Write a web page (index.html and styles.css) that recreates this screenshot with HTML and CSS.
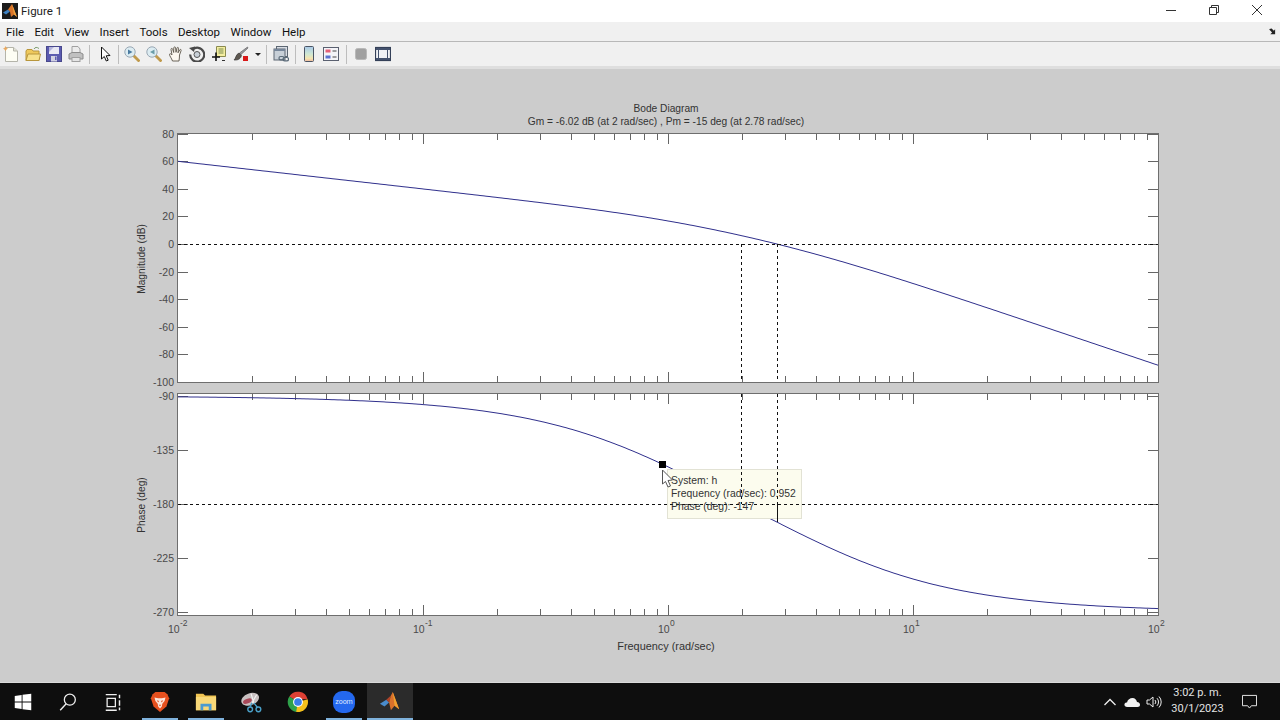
FILE: index.html
```html
<!DOCTYPE html>
<html>
<head>
    <title>Figure 1</title>
    <link rel="stylesheet" href="styles.css">
</head>
<body>
    <div class="titlebar">
        <svg class="title-icon" viewBox="0 0 16 16">
            <rect width="16" height="16" fill="#1c1c1c"/>
            <path d="M1 9.5 L6 6.5 L8 8.5 L4 11.5 Z" fill="#3f83c4"/>
            <path d="M6 6.5 L10 1 L15 14 L12 11.5 L9 14 L8 8.5 Z" fill="#d9742a"/>
            <path d="M10 1 L15 14 L12 11.5 Z" fill="#f0a23c"/>
        </svg>
        <span class="title-text">Figure 1</span>
        <div class="window-controls">
            <div class="win-btn">
                <svg viewBox="0 0 12 12"><path d="M1 6.5 H11" stroke="#333" fill="none"/></svg>
            </div>
            <div class="win-btn">
                <svg viewBox="0 0 12 12"><path d="M1.5 3.5 H8.5 V10.5 H1.5 Z M3.5 3.5 V1.5 H10.5 V8.5 H8.5" stroke="#333" fill="none"/></svg>
            </div>
            <div class="win-btn">
                <svg viewBox="0 0 12 12"><path d="M1 1 L11 11 M11 1 L1 11" stroke="#333" fill="none"/></svg>
            </div>
        </div>
    </div>

    <div class="menubar">
        <span>File</span>
        <span>Edit</span>
        <span>View</span>
        <span>Insert</span>
        <span>Tools</span>
        <span>Desktop</span>
        <span>Window</span>
        <span>Help</span>
        <svg class="dock-arrow" viewBox="0 0 8 8"><path d="M0.5 1 L3 0.5 L5.5 3 L7 1.5 V7 H1.5 L3.5 5 L0.5 2 Z" fill="#222"/></svg>
    </div>

    <div class="toolbar">
        <div class="tool">
            <svg viewBox="0 0 16 16">
                <path d="M2.5 1.5 H10.5 L14.5 5 V15.5 H2.5 Z" fill="#fdfdf4" stroke="#b4b4aa"/>
                <path d="M10.5 1.5 V5 H14.5" fill="#e2e2d6" stroke="#b4b4aa"/>
                <path d="M2.5 0 L3.5 2 L5 2.5 L3.5 3.5 L2.5 5 L1.5 3.5 L0 2.5 L1.5 2 Z" fill="#e8a860"/>
            </svg>
        </div>
        <div class="tool">
            <svg viewBox="0 0 16 16">
                <path d="M1 5 V14.5 H14 V5 H8 L7 3.5 H2 Z" fill="#efc95c" stroke="#b8963c"/>
                <path d="M1 14.5 L3 8 H15.5 L14 14.5 Z" fill="#f8e28c" stroke="#b8963c"/>
                <path d="M9 3 C10 1 12 1 14 2.5" fill="none" stroke="#7a9a6a"/>
            </svg>
        </div>
        <div class="tool">
            <svg viewBox="0 0 16 16">
                <rect x="0.5" y="0.5" width="15" height="15" fill="#5a5ab0" stroke="#48488c"/>
                <path d="M3 1 H13 V8 L3 8 Z" fill="#e8e8f4"/>
                <path d="M3 1 H8 L3 6 Z" fill="#b4b4dc"/>
                <rect x="5" y="10" width="6" height="5.5" fill="#d0d0e2"/>
                <rect x="9" y="10.5" width="1.5" height="3.5" fill="#5a5ab0"/>
            </svg>
        </div>
        <div class="tool">
            <svg viewBox="0 0 16 16">
                <path d="M4 7 V0.5 H10 L12 3 V7 Z" fill="#ececec" stroke="#a0a0a0"/>
                <path d="M1 8 L4 6.5 H12 L15 8 V13 H1 Z" fill="#c0c0c0" stroke="#8c8c8c"/>
                <rect x="4" y="11.5" width="8" height="4" fill="#e4e4e4" stroke="#a0a0a0"/>
            </svg>
        </div>
        <div class="tool-sep sep-a"></div>
        <div class="tool">
            <svg viewBox="0 0 16 16">
                <path d="M4.5 1 V13 L7.3 10.5 L9.3 15 L11.2 14.2 L9.2 9.8 L13 9.5 Z" fill="#fff" stroke="#111"/>
            </svg>
        </div>
        <div class="tool-sep sep-b"></div>
        <div class="tool">
            <svg viewBox="0 0 16 16">
                <path d="M9.5 9.5 L15.5 15.5" stroke="#c09a4c" stroke-width="2.8"/>
                <circle cx="6" cy="6" r="5.2" fill="#dcecf2" stroke="#9aa8b4"/>
                <path d="M4 3.5 L8.5 6 L4 8.5 Z" fill="#4a7aa0"/>
            </svg>
        </div>
        <div class="tool">
            <svg viewBox="0 0 16 16">
                <path d="M9.5 9.5 L15.5 15.5" stroke="#c09a4c" stroke-width="2.8"/>
                <circle cx="6" cy="6" r="5.2" fill="#dcecf2" stroke="#9aa8b4"/>
                <path d="M8.5 3.5 L4 6 L8.5 8.5 Z" fill="#6a9ca8"/>
            </svg>
        </div>
        <div class="tool">
            <svg viewBox="-1.5 0 16 16">
                <path d="M4 15 C3 12 1 10 1 8.5 C1 7.5 2.3 7.5 3 8.5 L3.5 9 L2.5 3.5 C2.3 2.3 3.8 2 4.2 3.2 L5.2 6.5 L5.3 1.8 C5.4 0.6 7 0.6 7.1 1.8 L7.5 6.3 L8.5 2 C8.8 1 10.2 1.2 10 2.5 L9.5 6.8 L11.3 3.8 C12 3 13 3.6 12.6 4.6 L11 9 C10.8 11 11 13 10.5 15 Z" fill="#fdf8f0" stroke="#5a5448" stroke-width="0.9"/>
            </svg>
        </div>
        <div class="tool">
            <svg viewBox="0 0 16 16">
                <path d="M3.5 3.5 A7 7 0 1 1 1.2 8.5" fill="none" stroke="#4a4a4a" stroke-width="2.2"/>
                <path d="M0 2 L6 0.5 L5 6 Z" fill="#4a4a4a"/>
                <circle cx="8" cy="8.5" r="3" fill="#c8d0d8" stroke="#555"/>
            </svg>
        </div>
        <div class="tool">
            <svg viewBox="0 0 16 16">
                <path d="M5.5 0.5 H14.5 V10.5 H5.5 Z" fill="#f4eea0" stroke="#8a8a50"/>
                <path d="M7.5 3 H12.5 M7.5 5 H12.5 M7.5 7 H12.5" stroke="#7a8a50"/>
                <path d="M5 6.5 V15 M1 11 H9" stroke="#111" stroke-width="1.6"/>
                <path d="M11 14.5 H14" stroke="#333"/>
            </svg>
        </div>
        <div class="tool">
            <svg viewBox="0 0 16 16">
                <path d="M14.5 1 L15 2 L8 8.5 L6.5 7 Z" fill="#9a9aa0" stroke="#555" stroke-width="0.6"/>
                <path d="M6 7 L8.5 9.5 C8 12.5 5 14.5 1 14 C3 12.5 2.5 8.5 6 7 Z" fill="#5e5850" stroke="#2c2c2c" stroke-width="0.6"/>
                <rect x="10" y="10" width="5" height="5" fill="#d81818"/>
            </svg>
        </div>
        <div class="tool-drop"><span class="drop-caret"></span></div>
        <div class="tool-sep sep-c"></div>
        <div class="tool">
            <svg viewBox="0 0 16 16">
                <rect x="3.5" y="0.5" width="11" height="10" fill="#d8dde4" stroke="#5c6672"/>
                <rect x="1" y="3" width="11" height="11" fill="#c8d0d8" stroke="#5c6672"/>
                <rect x="1" y="3" width="11" height="2" fill="#76869a"/>
                <rect x="6" y="10.5" width="5" height="3.4" rx="1.6" fill="none" stroke="#5a6a78" stroke-width="1.2"/>
                <rect x="10" y="11.5" width="5.5" height="3.4" rx="1.6" fill="none" stroke="#5a6a78" stroke-width="1.2"/>
            </svg>
        </div>
        <div class="tool-sep sep-d"></div>
        <div class="tool">
            <svg viewBox="0 0 16 16">
                <defs>
                    <linearGradient id="colorbar-fill" x1="0" y1="0" x2="0" y2="1">
                        <stop offset="0" stop-color="#a8c8e8"/>
                        <stop offset="0.5" stop-color="#cfe8d4"/>
                        <stop offset="0.8" stop-color="#f4e4b0"/>
                        <stop offset="1" stop-color="#eeb8a0"/>
                    </linearGradient>
                </defs>
                <rect x="3.5" y="0.5" width="9" height="15" rx="1" fill="url(#colorbar-fill)" stroke="#4a5464"/>
            </svg>
        </div>
        <div class="tool">
            <svg viewBox="0 0 16 16">
                <rect x="0.5" y="1.5" width="15" height="13" fill="#f4f4f8" stroke="#5a6070"/>
                <rect x="2.5" y="3.5" width="5" height="3" fill="#e46078"/>
                <rect x="2.5" y="9.5" width="5" height="3" fill="#5a72d0"/>
                <path d="M9.5 5 H13.5 M9.5 11 H13.5" stroke="#444"/>
            </svg>
        </div>
        <div class="tool-sep sep-e"></div>
        <div class="tool">
            <svg viewBox="0 0 16 16">
                <rect x="2.5" y="2.5" width="11" height="11" rx="2" fill="#a0a0a0" stroke="#b8b8b8"/>
            </svg>
        </div>
        <div class="tool">
            <svg viewBox="0 0 16 16">
                <rect x="0.5" y="1.5" width="15" height="13" fill="#f0f2f6" stroke="#344058" stroke-width="1.2"/>
                <rect x="1" y="2" width="14" height="2" fill="#44526e"/>
                <rect x="1" y="12" width="14" height="2" fill="#44526e"/>
                <path d="M3.5 4 V12 M12.5 4 V12" stroke="#44526e"/>
            </svg>
        </div>
    </div>
    <div class="toolbar-edge"></div>

    <div class="figure">
        <svg id="plot" class="plot" viewBox="0 69 1280 614"></svg>
    </div>

    <div class="taskbar">
        <div class="task-item first-item">
            <svg class="task-icon" viewBox="0 0 24 24">
                <path d="M3 5.5 L10.5 4.4 V11.5 H3 Z M11.5 4.2 L21 3 V11.5 H11.5 Z M3 12.5 H10.5 V19.6 L3 18.5 Z M11.5 12.5 H21 V21 L11.5 19.8 Z" fill="#fff"/>
            </svg>
        </div>
        <div class="task-item">
            <svg class="task-icon" viewBox="0 0 24 24">
                <circle cx="14" cy="9.5" r="6" fill="none" stroke="#eee" stroke-width="1.4"/>
                <path d="M10 14 L3.5 21" stroke="#eee" stroke-width="1.5"/>
            </svg>
        </div>
        <div class="task-item">
            <svg class="task-icon" viewBox="0 0 24 24">
                <path d="M3 4 H15 M3 21 H15 M4.5 8 H13.5 V17 H4.5 Z" fill="none" stroke="#eee" stroke-width="1.4"/>
                <path d="M18 4 V8 M18 10 V16 M18 18 V21" stroke="#eee" stroke-width="1.6"/>
            </svg>
        </div>
        <div class="task-item has-window">
            <svg class="task-icon" viewBox="0 0 24 24">
                <path d="M7 1 H17 L20 3.5 L22 8 L19 17 L12 23 L5 17 L2 8 L4 3.5 Z" fill="#e6501e"/>
                <path d="M6 7 L10 8 H14 L18 7 L17 11 L14.5 14 L14 17 L12 19 L10 17 L9.5 14 L7 11 Z" fill="#fbe6dc"/>
                <path d="M8.5 10 L11 11 L10 12.5 Z M15.5 10 L13 11 L14 12.5 Z M10.5 15 H13.5 L12 16.5 Z" fill="#e6501e"/>
            </svg>
        </div>
        <div class="task-item has-window">
            <svg class="task-icon" viewBox="0 0 24 24">
                <path d="M1 3 H9 L11 5 H23 V21 H1 Z" fill="#f0c452"/>
                <rect x="1" y="6.5" width="22" height="14.5" fill="#f8d878"/>
                <path d="M6 21 V14 H18 V21 H15 V17 H9 V21 Z" fill="#4a9ad0"/>
            </svg>
        </div>
        <div class="task-item">
            <svg class="task-icon" viewBox="0 0 24 24">
                <ellipse cx="10" cy="9" rx="10" ry="6.5" transform="rotate(-20 10 9)" fill="#c8c0c0"/>
                <ellipse cx="7" cy="11" rx="5" ry="2.5" transform="rotate(-20 7 11)" fill="#a84858"/>
                <path d="M11 3 L14 13 M17 4 L12 13" stroke="#f4f4f4" stroke-width="1.2"/>
                <path d="M14 13 L18 18 M12 13 L10 17" stroke="#4aa0c8" stroke-width="1.5"/>
                <circle cx="19" cy="20" r="2.6" fill="none" stroke="#4aa0c8" stroke-width="1.5"/>
                <circle cx="10" cy="20" r="2.6" fill="none" stroke="#4aa0c8" stroke-width="1.5"/>
            </svg>
        </div>
        <div class="task-item">
            <svg class="task-icon" viewBox="0 0 24 24">
                <path d="M12 12 L2.5 6 A11 11 0 0 1 22.5 9 H12 Z" fill="#dd4034"/>
                <path d="M12 12 L2.5 6 A11 11 0 0 0 10 22.8 L15 14 Z" fill="#2ea24a"/>
                <path d="M12 12 L22.5 9 A11 11 0 0 1 10 22.8 Z" fill="#f4c01c"/>
                <circle cx="12" cy="12" r="5.4" fill="#fff"/>
                <circle cx="12" cy="12" r="4.2" fill="#3a7ee8"/>
            </svg>
        </div>
        <div class="task-item has-window">
            <div class="zoom-badge">zoom</div>
        </div>
        <div class="task-item is-active">
            <svg class="task-icon" viewBox="0 0 24 24">
                <path d="M1 14 L8 9.5 L11 12.5 L6 17 Z" fill="#4a8ccc"/>
                <path d="M8 9.5 L11 12.5 L13 5 Z" fill="#b0442a"/>
                <path d="M13 5 L15 1 L22 20 L17 16 L13 21 L11 12.5 Z" fill="#d9702a"/>
                <path d="M15 1 L22 20 L17 16 Z" fill="#f0a030"/>
            </svg>
        </div>
        <div class="tray">
            <div class="tray-item">
                <svg viewBox="0 0 16 16"><path d="M2.5 11 L8 5.5 L13.5 11" fill="none" stroke="#eee" stroke-width="1.3"/></svg>
            </div>
            <div class="tray-item">
                <svg viewBox="0 0 16 16"><path d="M3.5 13 C1 13 0 11.5 0.5 10 C1 8.8 2 8.5 3 8.5 C3.5 5.5 6 4 8.5 4 C11 4 12.5 6 13 8 C15 8 16 9.5 16 10.8 C16 12.2 15 13 13.5 13 Z" fill="#f2f2f2"/></svg>
            </div>
            <div class="tray-item">
                <svg viewBox="0 0 16 16">
                    <path d="M1 6 H3.5 L7 3 V13 L3.5 10 H1 Z" fill="none" stroke="#eee"/>
                    <path d="M9 6 A3 3 0 0 1 9 10 M11 4.2 A5.5 5.5 0 0 1 11 11.8 M13 2.5 A8 8 0 0 1 13 13.5" fill="none" stroke="#eee"/>
                </svg>
            </div>
            <div class="clock">
                <span>3:02 p. m.</span>
                <span>30/1/2023</span>
            </div>
            <div class="tray-notify">
                <svg viewBox="0 0 16 16"><path d="M0.5 1.5 H15.5 V12.5 H10 L8 15 L6 12.5 H0.5 Z" fill="none" stroke="#eee"/></svg>
            </div>
        </div>
    </div>

    <script src="plot.js"></script>
</body>
</html>
```
FILE: styles.css
```css
html, body {
    margin: 0;
    padding: 0;
}

body {
    width: 1280px;
    height: 720px;
    overflow: hidden;
    display: flex;
    flex-direction: column;
    font-family: Roboto, "Noto Sans", sans-serif;
    background-color: #ccc;
}

.titlebar {
    height: 22px;
    flex: none;
    display: flex;
    align-items: center;
    background-color: #fff;
}

.title-icon {
    width: 16px;
    height: 16px;
    margin-left: 2px;
}

.title-text {
    margin-left: 3px;
    font-size: 11.5px;
    color: #222;
}

.window-controls {
    margin-left: auto;
    padding-right: 2px;
    display: flex;
}

.win-btn {
    width: 43px;
    height: 22px;
    display: flex;
    align-items: center;
    justify-content: center;
}

.win-btn svg {
    width: 12px;
    height: 12px;
    margin-top: -3px;
}

.menubar {
    height: 19px;
    flex: none;
    display: flex;
    align-items: center;
    gap: 10.4px;
    padding-left: 6px;
    background-color: #f0f0f0;
    border-bottom: 1px solid #b8b8b8;
    font-size: 11.5px;
    color: #111;
}

.dock-arrow {
    width: 7px;
    height: 7px;
    margin-left: auto;
    margin-right: 4px;
}

.toolbar {
    height: 24px;
    flex: none;
    display: flex;
    align-items: center;
    background-color: #f0f0f0;
}

.toolbar-edge {
    height: 3px;
    flex: none;
    background-color: #dedede;
}

.tool {
    width: 21.8px;
    height: 18px;
    flex: none;
    display: flex;
    align-items: center;
    justify-content: center;
}

.tool svg {
    width: 16px;
    height: 16px;
}

.tool-sep {
    height: 19px;
    flex: none;
}

.tool-sep::after {
    content: "";
    display: block;
    width: 1px;
    height: 19px;
    margin: 0 auto;
    background-color: #bdbdbd;
}

.sep-a::after,
.sep-c::after {
    margin-left: 2px;
}

.sep-a { width: 7px; }
.sep-b { width: 5px; }
.sep-c { width: 6px; }
.sep-d { width: 7px; }
.sep-e { width: 8px; }

.tool-drop {
    width: 12px;
    height: 18px;
    flex: none;
    display: flex;
    align-items: center;
    justify-content: center;
}

.drop-caret {
    width: 0;
    height: 0;
    border-left: 3px solid transparent;
    border-right: 3px solid transparent;
    border-top: 3px solid #222;
}

.figure {
    flex: 1;
    background-color: #ccc;
}

.plot {
    display: block;
    width: 1280px;
    height: 614px;
    font-family: "Liberation Sans", Arial, sans-serif;
}

.axes-bg {
    fill: #fff;
}

.axes-box {
    fill: none;
    stroke: #6e6e6e;
}

.tick {
    stroke: #666;
    shape-rendering: crispEdges;
}

.curve {
    fill: none;
    stroke: #2f2f8c;
}

.margin-line {
    stroke: #111;
    stroke-dasharray: 3 3;
    shape-rendering: crispEdges;
}

.margin-solid {
    stroke: #111;
    shape-rendering: crispEdges;
}

.title-label {
    font-size: 10.2px;
    fill: #333;
}

.axis-label {
    font-size: 10.2px;
    fill: #333;
}

.freq-label {
    font-size: 10.9px;
    fill: #333;
}

.tick-label {
    font-size: 10.5px;
    fill: #4a4a4a;
}

.tick-exp {
    font-size: 8.5px;
    fill: #4a4a4a;
}

.tip-box {
    fill: #fcfcee;
    stroke: #e2e2d4;
    shape-rendering: crispEdges;
}

.tip-text {
    font-size: 10.4px;
    fill: #333;
}

.taskbar {
    height: 37px;
    flex: none;
    display: flex;
    background-color: #0e0e0e;
    box-shadow: 0 -1px 0 #dadada;
}

.task-item {
    width: 46px;
    height: 37px;
    flex: none;
    position: relative;
    display: flex;
    align-items: center;
    justify-content: center;
}

.first-item {
    width: 45px;
}

.task-icon {
    width: 22px;
    height: 22px;
}

.task-item.has-window::after {
    content: "";
    position: absolute;
    left: 5px;
    right: 5px;
    bottom: 0;
    height: 2px;
    background-color: #7fb2dc;
}

.task-item.is-active {
    background-color: #2b2b2b;
}

.task-item.is-active::after {
    content: "";
    position: absolute;
    left: 0;
    right: 0;
    bottom: 0;
    height: 2px;
    background-color: #7fb2dc;
}

.zoom-badge {
    width: 22px;
    height: 22px;
    border-radius: 9px;
    background-color: #2468ee;
    color: #dfe8ff;
    font-size: 7px;
    line-height: 22px;
    text-align: center;
}

.tray {
    margin-left: auto;
    padding-right: 12px;
    display: flex;
    align-items: center;
    height: 37px;
}

.tray-item {
    width: 22px;
    display: flex;
    justify-content: center;
}

.tray-item svg {
    width: 16px;
    height: 16px;
}

.clock {
    width: 65px;
    margin-top: -2px;
    display: flex;
    flex-direction: column;
    align-items: center;
    font-size: 11px;
    line-height: 16px;
    color: #e4e4e4;
}

.tray-notify {
    width: 38px;
    display: flex;
    justify-content: center;
}

.tray-notify svg {
    width: 15px;
    height: 15px;
}
```
FILE: plot.js
```js
const SVG_NS = 'http://www.w3.org/2000/svg';
const plot = document.getElementById('plot');

const LEFT = 178;
const RIGHT = 1158;
const DECADE = 245;
const MAG = { top: 134, bottom: 382, zero: 244, scale: 1.378 };
const PHASE = { top: 394, bottom: 615, start: 396, scale: 1.2 };

function add(tag, cls, attrs, text) {
    const el = document.createElementNS(SVG_NS, tag);
    if (cls) el.setAttribute('class', cls);
    for (const key in attrs) el.setAttribute(key, attrs[key]);
    if (text !== undefined) el.textContent = text;
    plot.appendChild(el);
    return el;
}

function line(cls, x1, y1, x2, y2) {
    add('line', cls, { x1: x1, y1: y1, x2: x2, y2: y2 });
}

function xPos(w) {
    return LEFT + (Math.log10(w) + 2) * DECADE;
}

// h = 40 / (s (s + 1) (s + 4))
function magDb(w) {
    return 20 * Math.log10(40 / (w * Math.sqrt(w * w + 1) * Math.sqrt(w * w + 16)));
}

function phaseDeg(w) {
    return -90 - (Math.atan(w) + Math.atan(w / 4)) * 180 / Math.PI;
}

function magY(db) {
    return MAG.zero - db * MAG.scale;
}

function phaseY(deg) {
    return PHASE.start + (-90 - deg) * PHASE.scale;
}

function drawFrame(axes) {
    add('rect', 'axes-bg', { x: LEFT, y: axes.top, width: RIGHT - LEFT, height: axes.bottom - axes.top });
    for (let d = -2; d < 2; d++) {
        for (let m = 2; m < 10; m++) {
            const x = Math.round(xPos(m * Math.pow(10, d))) + 0.5;
            line('tick', x, axes.bottom, x, axes.bottom - 6);
            line('tick', x, axes.top, x, axes.top + 6);
        }
        if (d > -2) {
            const x = Math.round(xPos(Math.pow(10, d))) + 0.5;
            line('tick', x, axes.bottom, x, axes.bottom - 10);
            line('tick', x, axes.top, x, axes.top + 10);
        }
    }
}

function yTick(y, value) {
    const py = Math.round(y) + 0.5;
    line('tick', LEFT, py, LEFT + 10, py);
    line('tick', RIGHT, py, RIGHT - 10, py);
    add('text', 'tick-label', { x: 174, y: y + 4, 'text-anchor': 'end' }, value);
}

function curve(fn) {
    let d = '';
    for (let i = 0; i <= 490; i++) {
        const w = Math.pow(10, -2 + i / 122.5);
        d += (i ? ' L' : 'M') + xPos(w).toFixed(1) + ' ' + fn(w).toFixed(1);
    }
    add('path', 'curve', { d: d });
}

drawFrame(MAG);
drawFrame(PHASE);

for (let db = 80; db >= -100; db -= 20) yTick(magY(db), db);
for (let deg = -90; deg >= -270; deg -= 45) yTick(phaseY(deg), deg);

curve(function (w) { return magY(magDb(w)); });
curve(function (w) { return phaseY(phaseDeg(w)); });

// data tip sits over the phase curve, the margin lines still show through
add('rect', 'tip-box', { x: 667.5, y: 469.5, width: 134, height: 49 });

line('margin-line', LEFT, 244.5, RIGHT, 244.5);
line('margin-line', LEFT, 504.5, RIGHT, 504.5);
line('margin-line', 741.5, 244, 741.5, MAG.bottom);
line('margin-line', 741.5, PHASE.top, 741.5, 504);
line('margin-line', 777.5, 244, 777.5, MAG.bottom);
line('margin-line', 777.5, PHASE.top, 777.5, 504);
line('margin-solid', 777.5, 504, 777.5, 522);

add('rect', 'axes-box', { x: LEFT - 0.5, y: MAG.top - 0.5, width: RIGHT - LEFT + 1, height: MAG.bottom - MAG.top + 1 });
add('rect', 'axes-box', { x: LEFT - 0.5, y: PHASE.top - 0.5, width: RIGHT - LEFT + 1, height: PHASE.bottom - PHASE.top + 1 });

for (let d = -2; d <= 2; d++) {
    const x = xPos(Math.pow(10, d));
    add('text', 'tick-label', { x: x - 10, y: 633 }, '10');
    add('text', 'tick-exp', { x: x + 2, y: 626 }, d);
}

add('text', 'title-label', { x: 666, y: 112, 'text-anchor': 'middle' }, 'Bode Diagram');
add('text', 'title-label', { x: 666, y: 125, 'text-anchor': 'middle', 'xml:space': 'preserve' }, 'Gm = -6.02 dB (at 2 rad/sec) ,  Pm = -15 deg (at 2.78 rad/sec)');
add('text', 'freq-label', { x: 666, y: 650, 'text-anchor': 'middle' }, 'Frequency (rad/sec)');
add('text', 'axis-label', { x: 0, y: 0, 'text-anchor': 'middle', transform: 'translate(145 259) rotate(-90)' }, 'Magnitude (dB)');
add('text', 'axis-label', { x: 0, y: 0, 'text-anchor': 'middle', transform: 'translate(145 505) rotate(-90)' }, 'Phase (deg)');

add('rect', '', { x: 659, y: 461, width: 7, height: 7, fill: '#000' });
add('text', 'tip-text', { x: 671, y: 484 }, 'System: h');
add('text', 'tip-text', { x: 671, y: 497 }, 'Frequency (rad/sec): 0.952');
add('text', 'tip-text', { x: 671, y: 510 }, 'Phase (deg): -147');
add('path', '', { d: 'M662.5 470 V484 L665.5 481.5 L668 487 L670.5 486 L668 480.5 L672.5 480 Z', fill: '#fff', stroke: '#555' });
```
